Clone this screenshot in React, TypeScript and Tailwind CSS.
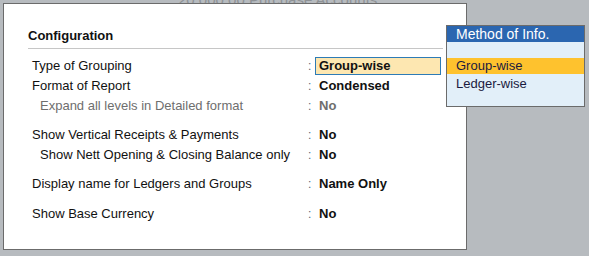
import React from "react";

type Row = { label: string; value: string; indent?: boolean; dim?: boolean; active?: boolean };

const groups: Row[][] = [
  [
    { label: "Type of Grouping", value: "Group-wise", active: true },
    { label: "Format of Report", value: "Condensed" },
    { label: "Expand all levels in Detailed format", value: "No", indent: true, dim: true },
  ],
  [
    { label: "Show Vertical Receipts & Payments", value: "No" },
    { label: "Show Nett Opening & Closing Balance only", value: "No", indent: true },
  ],
  [{ label: "Display name for Ledgers and Groups", value: "Name Only" }],
  [{ label: "Show Base Currency", value: "No" }],
];

export default function App() {
  return (
    <div
      className="relative w-[589px] h-[256px] overflow-hidden bg-[#b7bbbf] pt-[3px] pl-[3px]"
      style={{ fontFamily: '"Liberation Sans", Arial, sans-serif' }}
    >
      <div className="absolute left-[178px] top-[-11px] text-[15px] text-[#8e9296] whitespace-nowrap">
        20,000.00 Purchase Accounts
      </div>
      <div className="relative w-[464px] h-[247px] bg-white border border-[#6b6b6b] pt-6 pl-6 pr-[23px]">
        <div className="border-b border-[#c6c6c6] pb-1">
          <div className="h-4 leading-4 text-[13px] font-bold text-[#111]">Configuration</div>
        </div>
        <div className="mt-[7px] flex flex-col">
          {groups.map((g, gi) => (
            <div
              key={gi}
              className={"flex flex-col " + (gi === 0 ? "" : gi === 3 ? "mt-[10px]" : "mt-[9px]")}
            >
              {g.map((r) => (
                <div key={r.label} className="flex h-5 items-center text-[13px]">
                  <div
                    className={
                      "w-[280px] whitespace-nowrap " +
                      (r.indent ? "pl-3 " : "pl-1 ") +
                      (r.dim ? "text-[#6e6e6e]" : "text-[#111]")
                    }
                  >
                    {r.label}
                  </div>
                  <div className="w-[7px] text-[#5a6a7a] text-[12px]">:</div>
                  <div
                    className={
                      "h-[18px] w-[126px] flex items-center pl-[3px] font-bold whitespace-nowrap border " +
                      (r.active ? "border-[#2d7bb6] bg-[#fde7b1] " : "border-transparent ") +
                      (r.dim ? "text-[#6e6e6e]" : "text-[#111]")
                    }
                  >
                    {r.value}
                  </div>
                </div>
              ))}
            </div>
          ))}
        </div>
      </div>
      <div className="absolute left-[446px] top-[25px] w-[139px] h-[82px] border border-[#6b6b6b] bg-[#e2eff9] text-[13px]">
        <div className="h-4 leading-4 bg-[#2b66b0] text-white text-[14px] pl-[9px]">Method of Info.</div>
        <div className="h-4" />
        <div className="h-4 leading-4 bg-[#fec22e] text-[#1a1a40] pl-[9px]">Group-wise</div>
        <div className="h-4 leading-4 mt-[2px] text-[#1a1a40] pl-[9px]">Ledger-wise</div>
      </div>
    </div>
  );
}
